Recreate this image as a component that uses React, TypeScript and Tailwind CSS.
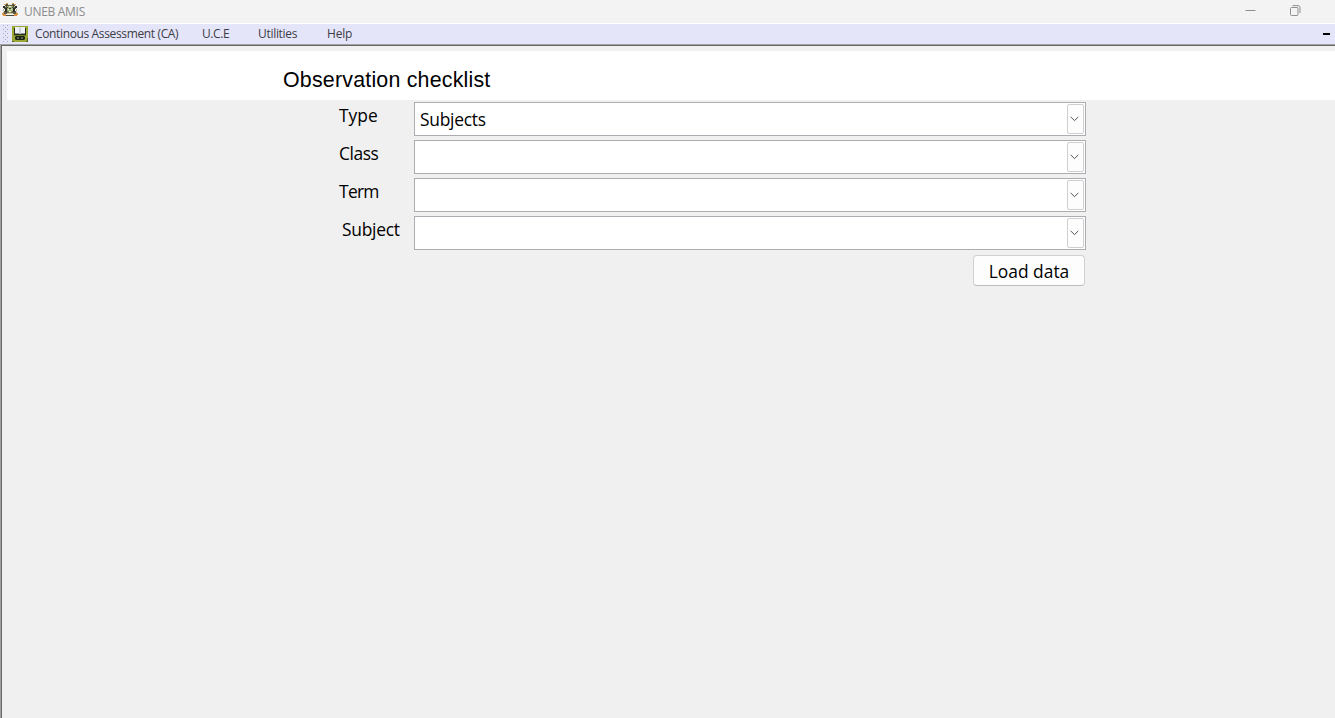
import React from "react";

const segoe = "font-['Open_Sans','Noto_Sans',sans-serif]";

function Crest() {
  return (
    <svg width="16" height="14" viewBox="0 0 16 14" className="shrink-0">
      <path d="M3 1h3v1h4V1h3v2h1v3h-1v2h1l1 3H1l1-3h1V6H2V3h1z" fill="#5c5c46" />
      <path d="M4 0h2v1H4zM10 0h2v1h-2zM2 1h2v1H2zM12 1h2v1h-2z" fill="#d59a5a" />
      <path d="M1 3h2v2H1zM13 3h2v2h-2zM3 5h2v4H3zM11 5h2v4h-2zM4 2h1v1H4zM11 2h1v1h-1z" fill="#2c2d26" />
      <path d="M1 6h1v2H1zM14 6h1v2h-1zM3 3h1v1H3zM12 3h1v1h-1z" fill="#b9b69c" />
      <path d="M5 3h6v5l-3 2-3-2z" fill="#a3b075" />
      <path d="M6 1h4v1H6zM6 6h1v1H6zM9 6h1v1H9zM7 8h2v1H7zM7 3h2v1H7z" fill="#eceddc" />
      <path d="M7 5h2v1H7zM5 4h1v1H5zM10 4h1v1h-1z" fill="#3f4a31" />
      <path d="M0 10h2v1h2v2H1v-1H0zM16 10h-2v1h-2v2h3v-1h1z" fill="#dc9140" />
      <path d="M5 10h6v1H5z" fill="#d8c99a" />
      <path d="M4 12h8v1H4z" fill="#4a4c3a" />
    </svg>
  );
}

function BookIcon() {
  return (
    <svg width="16" height="16" viewBox="0 0 16 16" className="shrink-0">
      <path d="M0 0h16v16H0z" fill="#9aa831" />
      <path d="M2 2h12v7H2z" fill="#2a301c" />
      <path d="M3 1h4l1 .6L9 1h4v6.5H9l-1 .7-1-.7H3z" fill="#eef0f7" />
      <path d="M7.5 2h1v5.5h-1z" fill="#aeb3c0" />
      <path d="M2 9h12v1H2z" fill="#6f7b28" />
      <path d="M4 10h8l1 1v2l-1 1H4l-1-1v-2z" fill="#1d2412" />
      <path d="M5 11.5h2v1H5zM9 11.5h2v1H9z" fill="#a0a68a" />
      <path d="M0 15h2v1H0zM14 15h2v1h-2zM15 12h1v3h-1z" fill="#5a6420" />
    </svg>
  );
}

function Grip() {
  const rows = [0, 1, 2, 3, 4, 5, 6, 7, 8];
  return (
    <svg width="6" height="18" viewBox="0 0 6 18" shapeRendering="crispEdges" className="shrink-0">
      {rows.map((r) => (
        <g key={r} fill="#a9a9bd">
          <rect x={r % 2 ? 2 : 0} y={r * 2} width="1" height="1" />
          {r % 2 === 0 && <rect x="4" y={r * 2} width="1" height="1" />}
        </g>
      ))}
    </svg>
  );
}

function Select({ value }: { value: string }) {
  return (
    <div className="flex h-[34px] w-[672px] items-center justify-between border border-[#abadb3] bg-white pr-px pl-[5px]">
      <span className="pt-[2px] text-[17.4px] leading-none tracking-[-0.25px]">{value}</span>
      <button className="flex h-[30px] w-[17px] items-center justify-center rounded-[2px] border border-[#cfcfcf] bg-[#fdfdfd] pr-[2px]">
        <svg width="9" height="6" viewBox="0 0 9 6" fill="none" className="shrink-0">
          <path d="M0.7 0.9L4.5 4.6L8.3 0.9" stroke="#555" />
        </svg>
      </button>
    </div>
  );
}

const fields = [
  { label: "Type", value: "Subjects", pad: "pl-[339px]", track: "tracking-[0px]" },
  { label: "Class", value: "", pad: "pl-[339px]", track: "tracking-[-0.45px]" },
  { label: "Term", value: "", pad: "pl-[339px]", track: "tracking-[-0.7px]" },
  { label: "Subject", value: "", pad: "pl-[342px]", track: "tracking-[-0.25px]" },
];

export default function App() {
  return (
    <div className={`flex h-[718px] w-[1335px] flex-col overflow-hidden bg-[#f0f0f0] text-black ${segoe}`}>
      <header className="flex h-[23px] shrink-0 items-center bg-[#f3f3f3] pl-[2px]">
        <div className="pb-[3px]"><Crest /></div>
        <span className="ml-[6px] pt-px text-[12px] leading-none tracking-[-0.3px] text-[#8c8c8c]">UNEB AMIS</span>
        <svg width="11" height="11" viewBox="0 0 11 11" className="mb-[2px] ml-auto">
          <path d="M0.5 5.5h10" stroke="#8f8f8f" />
        </svg>
        <svg width="11" height="11" viewBox="0 0 11 11" fill="none" className="mr-[34px] mb-[2px] ml-[34px]">
          <rect x="0.5" y="2.5" width="7.5" height="8" rx="1" stroke="#8f8f8f" />
          <path d="M2.5 0.6h5.5a2 2 0 0 1 2 2V8" stroke="#8f8f8f" />
        </svg>
      </header>
      <nav className="flex h-[21px] shrink-0 items-center border-t border-white bg-[#e5e5fa] pl-[3px] text-[12px] leading-none text-[#3c3c44]">
        <Grip />
        <div className="ml-[3px]"><BookIcon /></div>
        <span className="ml-[7px] w-[167px] whitespace-nowrap tracking-[-0.36px]">Continous Assessment (CA)</span>
        <span className="w-[56px] tracking-[-0.4px]">U.C.E</span>
        <span className="w-[69px] tracking-[-0.3px]">Utilities</span>
        <span className="tracking-[-0.2px]">Help</span>
        <span className="mr-[5px] ml-auto h-[2px] w-[7px] bg-black" />
      </nav>
      <div className="flex min-h-0 flex-1 border-t border-l border-[#a0a0a0]">
        <main className="flex flex-1 flex-col border-t border-l border-[#696969]">
          <div className="mt-[5px] ml-[5px] flex h-[49px] shrink-0 items-center bg-white pt-[10px] pl-[276px]">
            <h1 className="font-['Liberation_Sans',Arial,sans-serif] text-[21.4px] leading-none tracking-[0.2px]">Observation checklist</h1>
          </div>
          <div className="-ml-[2px] flex flex-col gap-[4px] pt-[2px]">
            {fields.map((f) => (
              <div key={f.label} className="flex h-[34px]">
                <div className={`w-[414px] shrink-0 pt-[4px] text-[17.4px] leading-[18px] ${f.pad} ${f.track}`}>{f.label}</div>
                <Select value={f.value} />
              </div>
            ))}
          </div>
          <button className="mt-[5px] ml-[971px] flex h-[31px] w-[112px] shrink-0 items-center justify-center rounded-[4px] border border-[#d0d0d0] border-b-[#bcbcbc] bg-[#fdfdfd] pt-[2px] text-[17.4px] leading-none">
            Load data
          </button>
        </main>
      </div>
    </div>
  );
}
